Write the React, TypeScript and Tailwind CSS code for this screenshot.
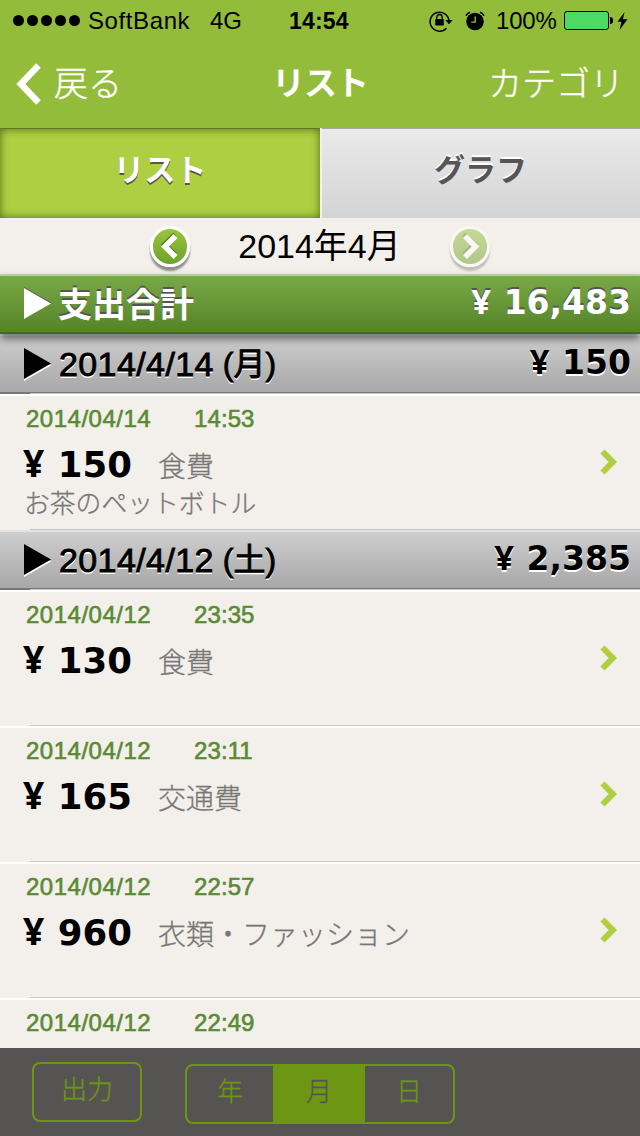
import clsx from "clsx";

type Entry = {
  date: string;
  time: string;
  amount?: string;
  category?: string;
  memo?: string;
};

type Day = {
  date: string;
  weekday: string;
  total: string;
  entries: Entry[];
};

const days: Day[] = [
  {
    date: "2014/4/14",
    weekday: "(月)",
    total: "150",
    entries: [
      { date: "2014/04/14", time: "14:53", amount: "150", category: "食費", memo: "お茶のペットボトル" },
    ],
  },
  {
    date: "2014/4/12",
    weekday: "(土)",
    total: "2,385",
    entries: [
      { date: "2014/04/12", time: "23:35", amount: "130", category: "食費" },
      { date: "2014/04/12", time: "23:11", amount: "165", category: "交通費" },
      { date: "2014/04/12", time: "22:57", amount: "960", category: "衣類・ファッション" },
      { date: "2014/04/12", time: "22:49" },
    ],
  },
];

function StatusBar() {
  return (
    <div className="flex h-10 items-center pl-[13px] pt-px text-[24px] leading-10 text-black">
      <div className="flex w-[75px] shrink-0 gap-[3px]">
        {[0, 1, 2, 3, 4].map((i) => (
          <span key={i} className="size-[11px] rounded-full bg-black" />
        ))}
      </div>
      <span className="w-[122px] shrink-0 tracking-[0.6px]">SoftBank</span>
      <span className="w-[79px] shrink-0">4G</span>
      <span className="w-[140px] shrink-0 text-[23px] font-bold tracking-[0.2px]">14:54</span>
      {/* 画面ロック */}
      <svg className="mr-[11px] shrink-0" width="25" height="22" viewBox="0 0 25 22">
        <path d="M17.5 18.2A9.5 9.5 0 1 1 20 10.5" fill="none" stroke="#000" strokeWidth="1.5" />
        <path d="M16.2 10h7.6L20 14.2z" />
        <rect x="6.2" y="9" width="8.6" height="6.6" rx="0.8" />
        <path d="M7.8 9.5V7.2a2.7 2.7 0 0 1 5.4 0v2.3" fill="none" stroke="#000" strokeWidth="1.3" />
      </svg>
      {/* アラーム */}
      <svg className="mr-[11px] shrink-0" width="20" height="20" viewBox="0 0 20 20">
        <circle cx="10" cy="10.5" r="8.8" />
        <path d="M1 4.8A6 6 0 0 1 5 1.2M19 4.8A6 6 0 0 0 15 1.2" fill="none" stroke="#000" strokeWidth="1.5" />
        <path d="M10.2 5.5v5.6H6.2" fill="none" stroke="#94bc3b" strokeWidth="1.4" />
      </svg>
      <span className="w-[68px] shrink-0 tracking-[-0.2px]">100%</span>
      <div className="h-[19px] w-[45px] shrink-0 rounded-[3px] border border-black bg-[#4cd964]" />
      <div className="ml-px h-[7px] w-[3px] shrink-0 rounded-r-full bg-black" />
      <svg className="ml-[4px] shrink-0" width="11" height="18" viewBox="0 0 11 18">
        <path d="M7.5 0L0.5 9.8h4L2.5 18L10.5 7.2H6z" />
      </svg>
    </div>
  );
}

function NavBar() {
  return (
    <div className="grid h-[88px] grid-cols-[240px_160px_240px] items-center pb-[3px] text-[33px] leading-[88px] text-white">
      <div className="flex items-center pl-4">
        <svg width="26" height="42" viewBox="0 0 26 42">
          <path d="M22.5 2.5L4.8 21L22.5 39.5" fill="none" stroke="#fff" strokeWidth="6.5" />
        </svg>
        <span className="ml-[12px] text-[34px] font-light [-webkit-text-stroke:0.4px_#fff]">戻る</span>
      </div>
      <span className="text-center font-bold tracking-[-1px]">リスト</span>
      <span className="pr-[16px] text-right text-[34px] font-light [-webkit-text-stroke:0.4px_#fff]">
        カテゴリ
      </span>
    </div>
  );
}

function Tabs() {
  return (
    <div className="flex h-[90px] gap-[2px] text-[31px] font-bold leading-[84px]">
      <div className="w-[320px] border-t border-[#5e7628] bg-[#afcf43] text-center text-white shadow-[inset_0_0_8px_rgba(50,70,0,0.75)] [text-shadow:0_2px_0_#555]">
        リスト
      </div>
      <div className="flex-1 border-t border-[#a5a5a5] bg-linear-to-b from-[#eaeaea] to-[#d4d4d4] pr-px text-center text-[#555] [text-shadow:0_-2px_0_#fff]">
        グラフ
      </div>
    </div>
  );
}

function MonthButton({ next }: { next?: boolean }) {
  return (
    <div
      className={clsx(
        "flex h-[41px] w-10 items-center justify-center rounded-full border-[3px] border-white bg-linear-to-b from-[#9bc43c] to-[#6da32c] shadow-[0_4px_2px_rgba(0,0,0,0.4)]",
        next && "opacity-50"
      )}
    >
      <svg width="20" height="28" viewBox="0 0 20 28">
        {next ? (
          <>
            <path d="M4 2.5L14.5 12.5L4 22.5" fill="none" stroke="#4f7a20" strokeWidth="5" />
            <path d="M5 4L15.5 14.5L5 25" fill="none" stroke="#fff" strokeWidth="5.5" />
          </>
        ) : (
          <>
            <path d="M15 2.5L4.5 12.5L15 22.5" fill="none" stroke="#4f7a20" strokeWidth="5" />
            <path d="M15.5 4L5 14.5L15.5 25" fill="none" stroke="#fff" strokeWidth="5.5" />
          </>
        )}
      </svg>
    </div>
  );
}

function MonthPicker() {
  return (
    <div className="flex h-14 items-center justify-center pr-px">
      <MonthButton />
      <span className="w-[260px] text-center text-[34px] leading-[56px] text-black">
        2014年4月
      </span>
      <MonthButton next />
    </div>
  );
}

function Triangle({ className }: { className?: string }) {
  return (
    <svg className={clsx("ml-6 mr-2 shrink-0 fill-current", className)} width="27" height="31" viewBox="0 0 27 31">
      <path d="M0 0L27 15.5L0 31z" />
    </svg>
  );
}

function Amount({ value, className }: { value: string; className?: string }) {
  return (
    <span className={clsx("font-['DejaVu_Sans'] font-bold", className)}>
      <span className="mr-[0.36em] font-['Noto_Sans'] text-[1.05em] leading-none">¥</span>
      {value}
    </span>
  );
}

function TotalBar() {
  return (
    <div className="relative z-10 flex h-[60px] items-start border-t-2 border-b-2 border-t-[#b5cf99] border-b-[#3f6a1c] bg-linear-to-b from-[#79a946] to-[#548428] leading-[52px] text-white shadow-[0_5px_8px_rgba(0,0,0,0.5)] [text-shadow:0_-2px_0_#555]">
      <Triangle className="mt-3 drop-shadow-[0_-1px_0_#555]" />
      <span className="-ml-px pt-[3px] text-[34px] font-bold">支出合計</span>
      <Amount value="16,483" className="ml-auto mr-[9px] pt-px text-[33px]" />
    </div>
  );
}

function DayHeader({ day }: { day: Day }) {
  return (
    <div className="flex h-[60px] flex-col">
      <div className="flex h-[59px] items-start border-t-2 border-b border-t-[#e3e3e5] border-b-[#777] bg-linear-to-b from-[#cecece] to-[#a8a8a8] leading-[52px] text-black [text-shadow:0_2px_0_#fff]">
        <Triangle className="mt-3 drop-shadow-[0_2px_0_#fff]" />
        <div className="flex gap-[9px] pt-[2px] [-webkit-text-stroke:0.9px_#000]">
          <span className="text-[34px] tracking-[0.4px]">{day.date}</span>
          <span className="text-[32px]">{day.weekday}</span>
        </div>
        <Amount value={day.total} className="ml-auto mr-[9px] pt-px text-[33px]" />
      </div>
      <div className="flex h-px bg-[#777]">
        <div className="ml-[30px] flex-1 bg-[#c8c8c8]" />
      </div>
    </div>
  );
}

function EntryRow({ entry }: { entry: Entry }) {
  return (
    <div className="flex h-[136px] flex-col border-t-2 border-white">
      <div className="flex flex-1 items-start">
        <div className="flex-1 pt-[7px]">
          <div className="flex h-8 pl-[26px] text-[24px] leading-8 text-[#5a8a33] [-webkit-text-stroke:0.6px_#5a8a33]">
            <span className="w-[168px] tracking-[0.5px]">{entry.date}</span>
            <span className="tracking-[0.1px]">{entry.time}</span>
          </div>
          {entry.amount && (
            <div className="flex h-[50px] items-center pl-[23px] pt-[10px]">
              <Amount value={entry.amount} className="w-[135px] text-[35.5px] text-black" />
              <span className="pt-[6px] text-[28px] font-light text-[#777] [-webkit-text-stroke:0.3px_#777]">
                {entry.category}
              </span>
            </div>
          )}
          {entry.memo && (
            <p className="pl-6 pt-px text-[25.8px] font-light leading-[36px] text-[#777] [-webkit-text-stroke:0.3px_#777]">
              {entry.memo}
            </p>
          )}
        </div>
        {entry.amount && (
          <svg className="mr-[22px] mt-[52px]" width="18" height="28" viewBox="0 0 18 28">
            <path d="M2.5 3.5L12.8 14L2.5 24.5" fill="none" stroke="#afcf43" strokeWidth="6" />
          </svg>
        )}
      </div>
      <div className="ml-[30px] h-px bg-[#c8c8c8]" />
    </div>
  );
}

function Toolbar() {
  return (
    <div className="flex h-[88px] shrink-0 bg-[#565452] pl-8 text-[26px] font-light text-[#6d9712]">
      <div className="mt-[14px] h-[60px] w-[110px] rounded-lg border-2 border-[#6d9712] text-center leading-[52px] [-webkit-text-stroke:0.3px_#6d9712]">
        出力
      </div>
      <div className="ml-[43px] mt-4 grid h-[60px] w-[270px] grid-cols-[86px_92px_1fr] rounded-lg border-2 border-[#6d9712] text-center leading-[52px]">
        <span className="[-webkit-text-stroke:0.3px_#6d9712]">年</span>
        <span className="bg-[#6d9712] text-[#565452] [-webkit-text-stroke:0.3px_#565452]">月</span>
        <span className="[-webkit-text-stroke:0.3px_#6d9712]">日</span>
      </div>
    </div>
  );
}

export default function App() {
  return (
    <div className="flex h-[1136px] w-[640px] flex-col overflow-hidden bg-[#f3efea] font-['Liberation_Sans','Noto_Sans_CJK_JP',sans-serif]">
      <div className="h-32 shrink-0 bg-[#94bc3b]">
        <StatusBar />
        <NavBar />
      </div>
      <Tabs />
      <MonthPicker />
      <TotalBar />
      <div className="h-[714px] overflow-hidden">
        {days.map((day) => (
          <section key={day.date}>
            <DayHeader day={day} />
            {day.entries.map((entry) => (
              <EntryRow key={entry.time} entry={entry} />
            ))}
          </section>
        ))}
      </div>
      <Toolbar />
    </div>
  );
}
